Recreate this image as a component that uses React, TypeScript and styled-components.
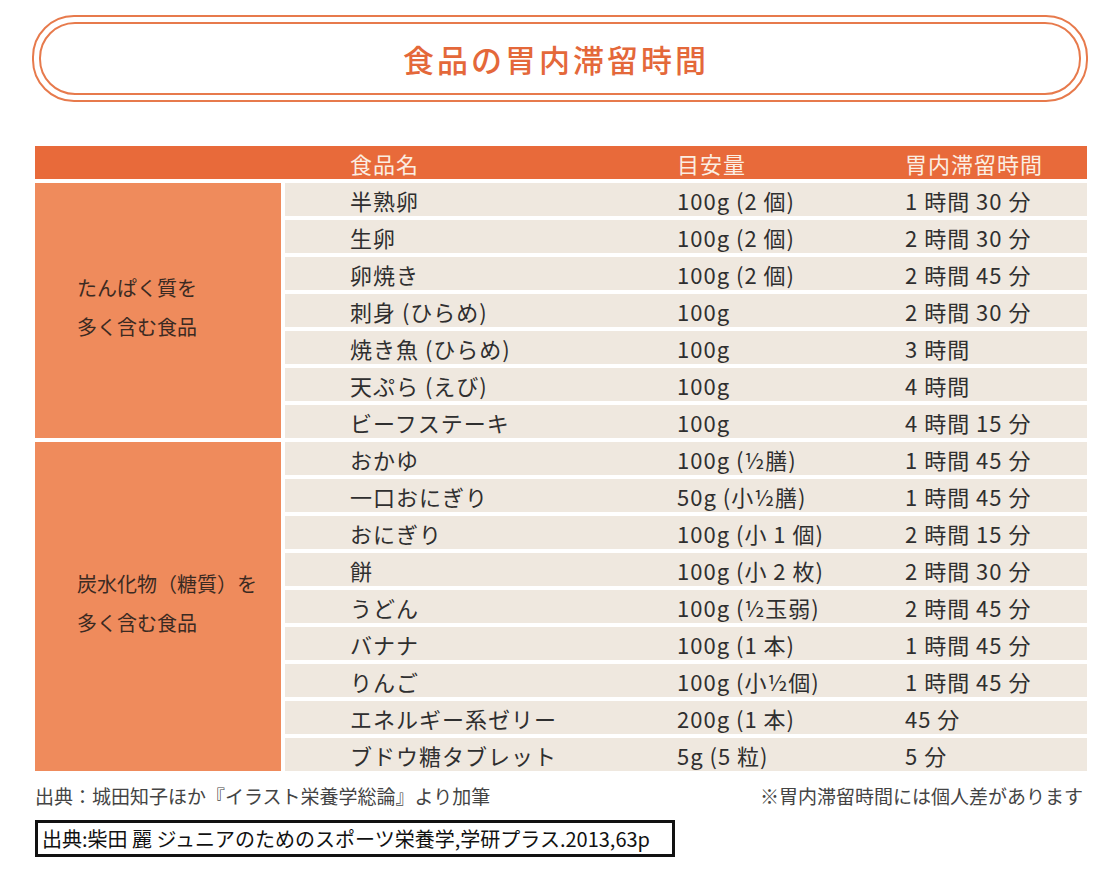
import styled, { createGlobalStyle } from 'styled-components';

const GlobalStyle = createGlobalStyle`
  body {
    margin: 0;
    background: #ffffff;
    font-family: "Noto Sans CJK JP", "Noto Sans", sans-serif;
    color: #333333;
  }
`

const Page = styled.div`
  width: 1120px;
  padding: 15px 0 0 32px;
  box-sizing: border-box;
`

const TitleOuter = styled.div`
  width: 1056px;
  height: 87px;
  box-sizing: border-box;
  border: 2px solid #e77a4c;
  border-radius: 42px;
  padding: 5px;
`

const TitleInner = styled.div`
  height: 100%;
  box-sizing: border-box;
  border: 2px solid #e77a4c;
  border-radius: 36px;
  display: flex;
  align-items: center;
  justify-content: center;
`

const Title = styled.h1`
  margin: 0 0 0 -8px;
  font-size: 31px;
  font-weight: 500;
  letter-spacing: 3px;
  color: #e4683a;
`

const Table = styled.div`
  margin: 44px 0 0 3px;
  width: 1052px;
  display: flex;
  flex-direction: column;
  gap: 4px;
`

const HeaderRow = styled.div`
  height: 33px;
  background: #e86a3a;
  display: grid;
  grid-template-columns: 250px 392px 228px 182px;
  align-items: center;
  font-size: 22px;
  letter-spacing: 1px;
  color: #fbeee2;
`

const Group = styled.div`
  display: flex;
  gap: 4px;
`

const Category = styled.div`
  width: 246px;
  flex: none;
  background: #ef8b5c;
  display: flex;
  flex-direction: column;
  justify-content: center;
  padding: 0 0 8px 42px;
  box-sizing: border-box;
  font-size: 20px;
  line-height: 39px;
  color: #3b2a22;
`

const Rows = styled.div`
  flex: 1;
  display: flex;
  flex-direction: column;
  gap: 4px;
`

const Row = styled.div`
  height: 33px;
  background: #efe8df;
  display: grid;
  grid-template-columns: 392px 228px 182px;
  align-items: center;
  font-size: 22px;
  letter-spacing: 1px;
  color: #2f2f2f;
`

const Cell = styled.span<{ $indent?: number }>`
  padding-left: ${p => p.$indent ?? 0}px;
  white-space: nowrap;
`

const Notes = styled.div`
  width: 1052px;
  margin: 12px 0 0 3px;
  display: flex;
  justify-content: space-between;
  font-size: 19px;
  line-height: 26px;
  color: #444444;
  padding-right: 4px;
  box-sizing: border-box;
`

const SourceBox = styled.div`
  margin: 11px 0 0 3px;
  width: 640px;
  height: 37px;
  box-sizing: border-box;
  border: 3px solid #111111;
  display: flex;
  align-items: center;
  padding-left: 4px;
  font-size: 20px;
  color: #111111;
`

interface IFood {
  name: string;
  amount: string;
  time: string;
}

const protein: IFood[] = [
  { name: '半熟卵', amount: '100g (2 個)', time: '1 時間 30 分' },
  { name: '生卵', amount: '100g (2 個)', time: '2 時間 30 分' },
  { name: '卵焼き', amount: '100g (2 個)', time: '2 時間 45 分' },
  { name: '刺身 (ひらめ)', amount: '100g', time: '2 時間 30 分' },
  { name: '焼き魚 (ひらめ)', amount: '100g', time: '3 時間' },
  { name: '天ぷら (えび)', amount: '100g', time: '4 時間' },
  { name: 'ビーフステーキ', amount: '100g', time: '4 時間 15 分' },
];

const carbs: IFood[] = [
  { name: 'おかゆ', amount: '100g (½膳)', time: '1 時間 45 分' },
  { name: '一口おにぎり', amount: '50g (小½膳)', time: '1 時間 45 分' },
  { name: 'おにぎり', amount: '100g (小 1 個)', time: '2 時間 15 分' },
  { name: '餅', amount: '100g (小 2 枚)', time: '2 時間 30 分' },
  { name: 'うどん', amount: '100g (½玉弱)', time: '2 時間 45 分' },
  { name: 'バナナ', amount: '100g (1 本)', time: '1 時間 45 分' },
  { name: 'りんご', amount: '100g (小½個)', time: '1 時間 45 分' },
  { name: 'エネルギー系ゼリー', amount: '200g (1 本)', time: '45 分' },
  { name: 'ブドウ糖タブレット', amount: '5g (5 粒)', time: '5 分' },
];

const renderRows = (foods: IFood[]) =>
  foods.map(f => (
    <Row key={f.name}>
      <Cell $indent={65}>{f.name}</Cell>
      <Cell>{f.amount}</Cell>
      <Cell>{f.time}</Cell>
    </Row>
  ));

export default function App() {
  return (
    <Page>
      <GlobalStyle />
      <TitleOuter>
        <TitleInner>
          <Title>食品の胃内滞留時間</Title>
        </TitleInner>
      </TitleOuter>

      <Table>
        <HeaderRow>
          <span />
          <Cell $indent={65}>食品名</Cell>
          <Cell>目安量</Cell>
          <Cell>胃内滞留時間</Cell>
        </HeaderRow>

        <Group>
          <Category>
            <div>たんぱく質を</div>
            <div>多く含む食品</div>
          </Category>
          <Rows>{renderRows(protein)}</Rows>
        </Group>

        <Group>
          <Category>
            <div>炭水化物（糖質）を</div>
            <div>多く含む食品</div>
          </Category>
          <Rows>{renderRows(carbs)}</Rows>
        </Group>
      </Table>

      <Notes>
        <span>出典：城田知子ほか『イラスト栄養学総論』より加筆</span>
        <span>※胃内滞留時間には個人差があります</span>
      </Notes>

      <SourceBox>出典:柴田 麗 ジュニアのためのスポーツ栄養学,学研プラス.2013,63p</SourceBox>
    </Page>
  )
}
